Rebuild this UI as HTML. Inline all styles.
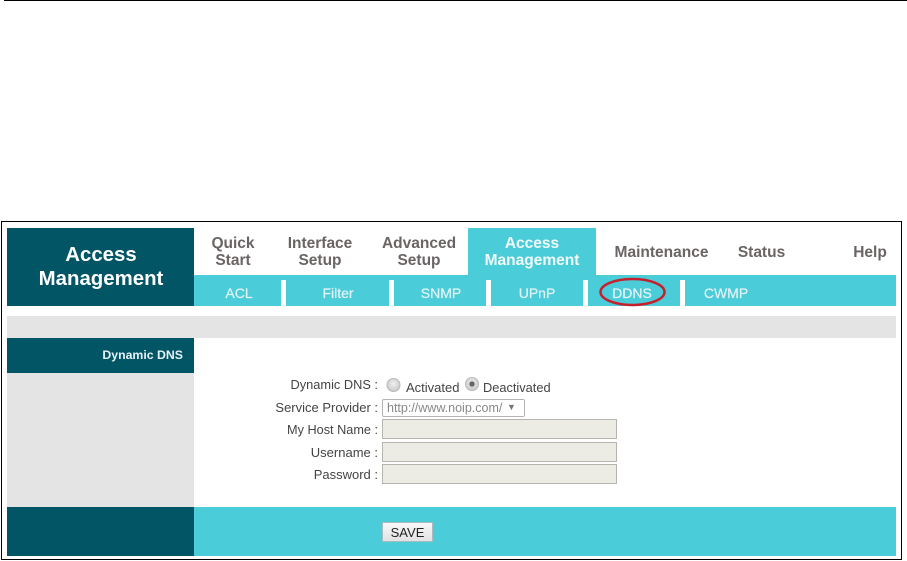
<!DOCTYPE html>
<html><head><meta charset="utf-8">
<style>
html,body{margin:0;padding:0;background:#fff}
body{width:907px;height:561px;position:relative;overflow:hidden;font-family:"Liberation Sans",sans-serif}
.a{position:absolute}
#w{position:absolute;left:0;top:0;width:907px;height:561px;filter:blur(.35px)}
.t{position:absolute;white-space:nowrap;line-height:17px;text-align:center;transform:translateX(-50%)}
.m{font-size:15.500px;font-weight:bold;color:#6a6464}
.s{font-size:14px;color:#e4f4f6;top:285px;line-height:16px;-webkit-text-stroke:.2px #e4f4f6}
.l{position:absolute;right:529px;font-size:13px;color:#444;white-space:nowrap;line-height:14px}
.i{position:absolute;left:382px;width:233px;height:18px;background:#ecece4;border:1px solid #b5b5ae}
.sep{position:absolute;top:280px;width:5px;height:26px;background:#fff}
</style></head><body>
<div class="a" style="left:4px;top:0;width:903px;height:1px;background:#000"></div>
<div class="a" style="left:1px;top:221px;width:899px;height:337px;border:1px solid #000;box-sizing:content-box"></div>
<div id="w">
<div class="a" style="left:7px;top:228px;width:187px;height:78px;background:#015565"></div>
<div class="a" style="left:194px;top:275px;width:702px;height:31px;background:#4accd9"></div>
<div class="a" style="left:468px;top:228px;width:128px;height:47px;background:#4accd9"></div>
<div class="sep" style="left:281px"></div>
<div class="sep" style="left:389px"></div>
<div class="sep" style="left:486px"></div>
<div class="sep" style="left:583px"></div>
<div class="sep" style="left:680px"></div>

<div class="t" style="left:101px;top:243px;font-size:20.400px;font-weight:bold;color:#fff;line-height:24px">Access<br>Management</div>

<div class="t m" style="left:233px;top:235px">Quick<br>Start</div>
<div class="t m" style="left:320px;top:235px">Interface<br>Setup</div>
<div class="t m" style="left:419px;top:235px">Advanced<br>Setup</div>
<div class="t m" style="left:532px;top:235px;color:#f2fbfc">Access<br>Management</div>
<div class="t m" style="left:661.500px;top:244px">Maintenance</div>
<div class="t m" style="left:761.500px;top:244px">Status</div>
<div class="t m" style="left:870px;top:244px">Help</div>

<div class="t s" style="left:239px">ACL</div>
<div class="t s" style="left:338px">Filter</div>
<div class="t s" style="left:441px">SNMP</div>
<div class="t s" style="left:537px">UPnP</div>
<div class="t s" style="left:632px">DDNS</div>
<div class="t s" style="left:726px">CWMP</div>

<svg class="a" style="left:595px;top:274px" width="76" height="36"><ellipse cx="37.500" cy="18" rx="32" ry="13" fill="none" stroke="#c5202c" stroke-width="2.500"/></svg>

<div class="a" style="left:7px;top:316px;width:889px;height:22px;background:#e4e4e4"></div>
<div class="a" style="left:7px;top:338px;width:187px;height:35px;background:#015565"></div>
<div class="a" style="left:7px;top:373px;width:187px;height:134px;background:#e4e4e4"></div>
<div class="a" style="right:724px;top:348px;font-size:12.300px;font-weight:bold;color:#e6f2f4;line-height:14px;white-space:nowrap">Dynamic DNS</div>

<div class="l" style="top:378px;font-size:12.800px">Dynamic DNS :</div>
<div class="l" style="top:401px">Service Provider :</div>
<div class="l" style="top:423px;font-size:12.700px">My Host Name :</div>
<div class="l" style="top:446px">Username :</div>
<div class="l" style="top:468px">Password :</div>

<svg class="a" style="left:385px;top:376px" width="105" height="16">
<defs><radialGradient id="g" cx=".5" cy=".4" r=".6"><stop offset="0" stop-color="#efefef"/><stop offset="1" stop-color="#c9c9c9"/></radialGradient></defs>
<circle cx="8.500" cy="9" r="6.500" fill="url(#g)" stroke="#b8b8b8"/>
<circle cx="87" cy="8" r="6.500" fill="url(#g)" stroke="#b8b8b8"/>
<circle cx="87" cy="8" r="2.700" fill="#666"/>
</svg>
<div class="a" style="left:406px;top:381px;font-size:13px;color:#444;line-height:14px;white-space:nowrap">Activated</div>
<div class="a" style="left:483px;top:381px;font-size:12.800px;color:#444;line-height:14px;white-space:nowrap">Deactivated</div>

<div class="a" style="left:382px;top:399px;width:141px;height:16px;border:1px solid #b4b4b4;border-radius:2px;background:#fff;font-size:12.500px;color:#888;line-height:16px;text-indent:4px;white-space:nowrap">http://www.noip.com/<span class="a" style="left:124px;top:-1px;font-size:9px;color:#777;text-indent:0">▼</span></div>

<div class="i" style="top:419px"></div>
<div class="i" style="top:442px"></div>
<div class="i" style="top:464px"></div>

<div class="a" style="left:7px;top:507px;width:187px;height:49px;background:#015565"></div>
<div class="a" style="left:194px;top:507px;width:702px;height:49px;background:#4accd9"></div>
<div class="a" style="left:382px;top:522px;width:49px;height:18px;background:linear-gradient(#f8f8f8,#e2e2e2);border:1px solid #a8bcc0;box-sizing:content-box;font-size:13px;color:#222;line-height:19px;text-align:center">SAVE</div>
</div>
</body></html>
